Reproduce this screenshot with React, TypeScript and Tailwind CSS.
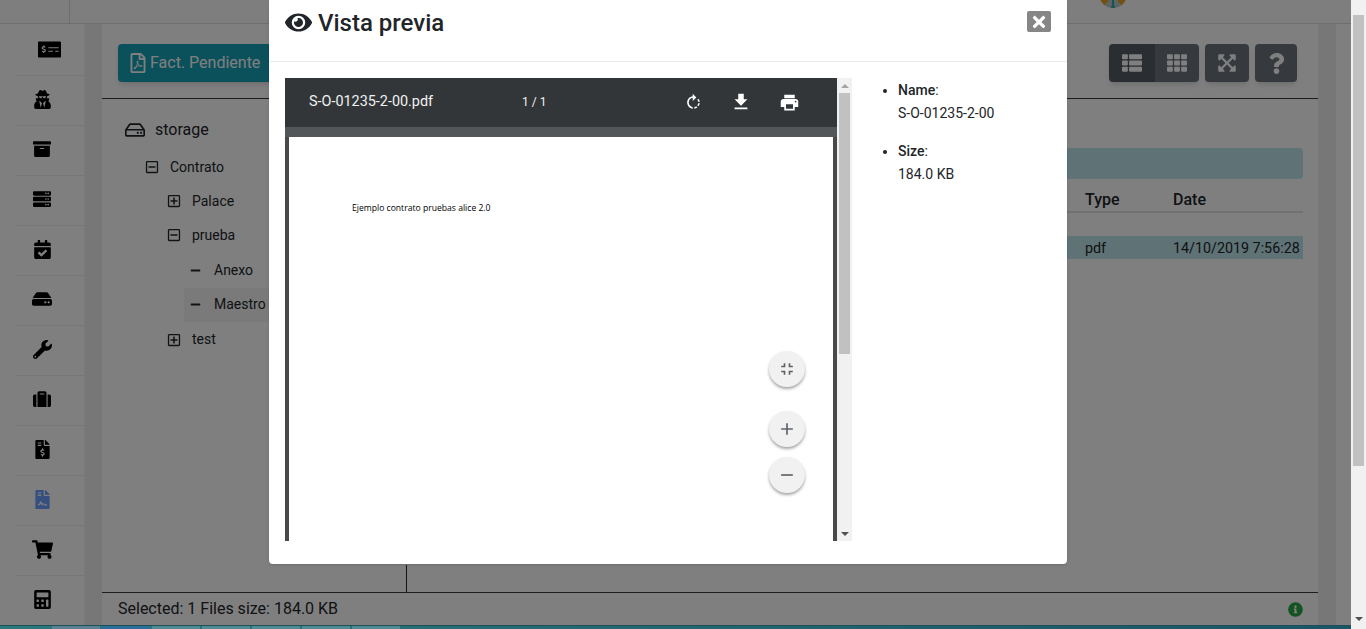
import {
  FaArchive,
  FaCalculator,
  FaCalendarCheck,
  FaEye,
  FaExpandArrowsAlt,
  FaFileContract,
  FaFileInvoiceDollar,
  FaHdd,
  FaInfoCircle,
  FaMinus,
  FaMoneyCheckAlt,
  FaQuestion,
  FaRegFilePdf,
  FaRegHdd,
  FaRegMinusSquare,
  FaRegPlusSquare,
  FaServer,
  FaShoppingCart,
  FaSuitcase,
  FaTh,
  FaThList,
  FaTimes,
  FaUserSecret,
  FaWrench,
} from 'react-icons/fa';
import {
  MdAdd,
  MdFileDownload,
  MdFullscreenExit,
  MdPrint,
  MdRemove,
  MdRotateRight,
} from 'react-icons/md';

const stripColors = [
  'bg-[#5a8290]',
  'bg-[#2a6f9a]',
  'bg-[#4f8b90]',
  'bg-[#4f8b90]',
  'bg-[#4f8b90]',
  'bg-[#4f8b90]',
  'bg-[#4f8b90]',
];

function Sidebar() {
  return (
    <div className="flex w-[85px] shrink-0 flex-col border-r border-[#f2f2f2] bg-white pl-[15px] pt-[2px]">
      <div className="flex h-[50px] shrink-0 items-center justify-center border-b border-[#eeeeee] pb-[3px]">
        <FaMoneyCheckAlt size={23} className="text-black" />
      </div>
      <SideRow><FaUserSecret size={19} /></SideRow>
      <SideRow><FaArchive size={18} /></SideRow>
      <SideRow><FaServer size={18} /></SideRow>
      <SideRow><FaCalendarCheck size={19} /></SideRow>
      <SideRow><FaHdd size={20} /></SideRow>
      <SideRow><FaWrench size={19} /></SideRow>
      <SideRow><FaSuitcase size={18} /></SideRow>
      <SideRow><FaFileInvoiceDollar size={19} /></SideRow>
      <SideRow><FaFileContract size={19} className="text-[#6a9fff]" /></SideRow>
      <SideRow><FaShoppingCart size={21} /></SideRow>
      <SideRow last><FaCalculator size={19} /></SideRow>
    </div>
  );
}

function SideRow({ children, last }: { children: React.ReactNode; last?: boolean }) {
  return (
    <div
      className={`flex h-[50px] shrink-0 items-center justify-center pr-[15px] text-black ${
        last ? 'pb-[4px]' : 'border-b border-[#eeeeee] pb-[3px]'
      }`}
    >
      {children}
    </div>
  );
}

function Tree() {
  return (
    <div className="w-[304px] shrink-0 pl-[23px] pt-[14px] text-[14px] text-[#212529]">
      <div className="flex h-[34px] items-center text-[16px]">
        <FaRegHdd size={20} className="mr-[10px]" />
        storage
      </div>
      <div className="mt-[3px] flex h-[34px] items-center pl-[20px]">
        <FaRegMinusSquare size={14} className="mr-[11px]" />
        Contrato
      </div>
      <div className="flex h-[34px] items-center pl-[42px]">
        <FaRegPlusSquare size={14} className="mr-[11px]" />
        Palace
      </div>
      <div className="flex h-[34px] items-center pl-[42px]">
        <FaRegMinusSquare size={14} className="mr-[11px]" />
        prueba
      </div>
      <div className="mt-[1px] flex h-[35px] items-center pl-[65px]">
        <FaMinus size={11} className="mr-[13px]" />
        Anexo
      </div>
      <div className="ml-[59px] flex h-[34px] items-center bg-[#f5f5f5] pb-[2px] pl-[6px]">
        <FaMinus size={11} className="mr-[13px]" />
        Maestro
      </div>
      <div className="flex h-[35px] items-center pl-[42px]">
        <FaRegPlusSquare size={14} className="mr-[11px]" />
        test
      </div>
    </div>
  );
}

function FileTable() {
  return (
    <div className="flex flex-1 flex-col pr-[15px] pt-[49px] text-[14.3px] text-[#212529]">
      <div className="h-[31px] shrink-0 rounded-[4px] bg-[#bee5eb]" />
      <div className="flex h-[34px] shrink-0 items-center border-b-2 border-[#dee2e6] pt-[10px] text-[16px] font-medium">
        <span className="ml-[679px] w-[88px]">Type</span>
        <span>Date</span>
      </div>
      <div className="mt-[23px] flex h-[23px] shrink-0 items-center bg-[#bee5eb] pt-[2px]">
        <span className="ml-[679px] w-[88px]">pdf</span>
        <span>14/10/2019 7:56:28</span>
      </div>
      <div className="mt-auto h-[27px] w-px bg-[#212529]" />
    </div>
  );
}

function MainPanel() {
  return (
    <div className="flex w-[1216px] shrink-0 flex-col bg-white pt-[4px] font-['Roboto',sans-serif]">
      <div className="flex h-[71px] shrink-0 items-start border-b border-[#343a40] pl-[16px] pr-[21px] pt-[16px]">
        <button className="flex h-[38px] w-[170px] items-center rounded-[4px] bg-[#17a2b8] pl-[10px] text-[16px] text-white shadow-md">
          <FaRegFilePdf size={20} className="mr-[2px]" />
          Fact. Pendiente
        </button>
        <div className="ml-auto flex gap-[6px]">
          <div className="flex rounded-[4px] shadow-md">
            <div className="flex h-[38px] w-[46px] items-center justify-center rounded-l-[4px] bg-[#545b62] text-white">
              <FaThList size={20} />
            </div>
            <div className="flex h-[38px] w-[44px] items-center justify-center rounded-r-[4px] bg-[#6c757d] text-white">
              <FaTh size={20} />
            </div>
          </div>
          <div className="flex h-[38px] w-[44px] items-center justify-center rounded-[4px] bg-[#6c757d] text-white shadow-md">
            <FaExpandArrowsAlt size={20} />
          </div>
          <div className="flex h-[38px] w-[42px] items-center justify-center rounded-[4px] bg-[#6c757d] text-white shadow-md">
            <FaQuestion size={21} />
          </div>
        </div>
      </div>
      <div className="flex min-h-0 flex-1">
        <Tree />
        <FileTable />
      </div>
      <div className="flex h-[33px] shrink-0 items-center border-t border-[#343a40] pl-[16px] pr-[15px] text-[16px] text-[#212529]">
        Selected: 1 Files size: 184.0 KB
        <FaInfoCircle size={15} className="ml-auto text-[#28a745]" />
      </div>
    </div>
  );
}

function PdfViewer() {
  return (
    <div className="relative flex h-[463px] w-[567px] shrink-0">
      <div className="flex w-[552px] flex-col overflow-hidden bg-[#8f9295]">
        <div className="flex h-[49px] shrink-0 items-center bg-[#323639] pb-[1px] pl-[24px] text-[14.4px] text-[#f1f1f1] shadow-[0_2px_4px_rgba(0,0,0,0.3)]">
          <span className="w-[213px]">S-O-01235-2-00.pdf</span>
          <span className="w-[100px] text-[12px]">1 / 1</span>
          <MdRotateRight size={19} className="ml-[62px] text-white" />
          <MdFileDownload size={22} className="ml-[27px] text-white" />
          <MdPrint size={21} className="ml-[27px] text-white" />
        </div>
        <div className="h-[10px] shrink-0 bg-[#525659]" />
        <div className="flex-1 border-x-4 border-[#48494b] bg-white pl-[63px] pt-[65px] font-['Open_Sans',sans-serif] text-[8.6px] text-black">
          Ejemplo contrato pruebas alice 2.0
        </div>
      </div>
      <div className="flex w-[15px] flex-col items-center bg-[#f1f1f1]">
        <div className="mt-[6px] h-0 w-0 border-x-[4px] border-b-[4px] border-x-transparent border-b-[#a3a3a3]" />
        <div className="mt-[5px] h-[261px] w-[11px] bg-[#c1c1c1]" />
        <div className="mb-[5px] mt-auto h-0 w-0 border-x-[4px] border-t-[4px] border-x-transparent border-t-[#505050]" />
      </div>
      <div className="absolute left-[484px] top-[273px] flex h-[36px] w-[36px] items-center justify-center rounded-full bg-[#f1f1f1] text-[#5f6368] shadow-[0_2px_3px_rgba(0,0,0,0.35)]">
        <MdFullscreenExit size={20} />
      </div>
      <div className="absolute left-[484px] top-[333px] flex h-[36px] w-[36px] items-center justify-center rounded-full bg-[#f1f1f1] text-[#5f6368] shadow-[0_2px_3px_rgba(0,0,0,0.35)]">
        <MdAdd size={20} />
      </div>
      <div className="absolute left-[484px] top-[379px] flex h-[36px] w-[36px] items-center justify-center rounded-full bg-[#f1f1f1] text-[#5f6368] shadow-[0_2px_3px_rgba(0,0,0,0.35)]">
        <MdRemove size={20} />
      </div>
    </div>
  );
}

function PreviewModal() {
  return (
    <div className="absolute left-[269px] top-0 flex h-[564px] w-[798px] flex-col rounded-b-[4px] bg-white font-['Roboto',sans-serif] text-[#212529] shadow-sm">
      <div className="flex h-[62px] shrink-0 items-start border-b border-[#e9ecef] px-[16px] pt-[5px]">
        <FaEye size={27} className="mr-[6px] mt-[4px]" />
        <h5 className="text-[24px] font-medium leading-[36px]">Vista previa</h5>
        <button className="ml-auto mt-[6px] flex h-[21px] w-[24px] items-center justify-center rounded-[2px] bg-[#868686] text-white">
          <FaTimes size={18} />
        </button>
      </div>
      <div className="flex px-[16px] pt-[16px]">
        <PdfViewer />
        <ul className="list-disc pl-[46px] pt-[1px] text-[14px] leading-[23px]">
          <li>
            <b className="font-medium">Name</b>:
            <br />
            S-O-01235-2-00
          </li>
          <li className="mt-[15px]">
            <b className="font-medium">Size</b>:
            <br />
            184.0 KB
          </li>
        </ul>
      </div>
    </div>
  );
}

export default function App() {
  return (
    <div className="flex h-[629px] w-[1366px] overflow-hidden bg-white">
      <div className="relative flex w-[1351px] shrink-0 flex-col">
        <div className="flex h-[24px] shrink-0 overflow-hidden border-b border-[#dcdcdc] bg-[#fcfcfc] pl-[69px]">
          <div className="h-full w-px bg-[#dcdcdc]" />
          <div className="-mt-[20px] ml-[1029px] h-[28px] w-[28px] rounded-full bg-[conic-gradient(#e8a020_0_40%,#b8c8c8_40%_48%,#2fa8a8_48%_52%,#b8c8c8_52%_60%,#e8a020_60%)]" />
        </div>
        <div className="flex min-h-0 flex-1">
          <Sidebar />
          <div className="w-[17px] shrink-0 bg-[#eeeeee]" />
          <MainPanel />
          <div className="w-[18px] shrink-0 bg-[#eeeeee]" />
        </div>
        <div className="flex h-[4px] shrink-0 gap-[2px] border-t border-[#1f4f5a] bg-[linear-gradient(90deg,#2a7a7a,#1a5563)] pl-[52px]">
          {stripColors.map((color, i) => (
            <div key={i} className={`h-full w-[48px] ${color}`} />
          ))}
        </div>
        <div className="absolute inset-x-0 top-0 bottom-[4px] bg-black/50" />
        <PreviewModal />
      </div>
      <div className="flex w-[15px] shrink-0 flex-col items-center bg-[#f1f1f1]">
        <div className="mt-[15px] h-[451px] w-[11px] bg-[#c1c1c1]" />
        <div className="mb-[8px] mt-auto h-0 w-0 border-x-[4px] border-t-[4px] border-x-transparent border-t-[#505050]" />
      </div>
    </div>
  );
}
